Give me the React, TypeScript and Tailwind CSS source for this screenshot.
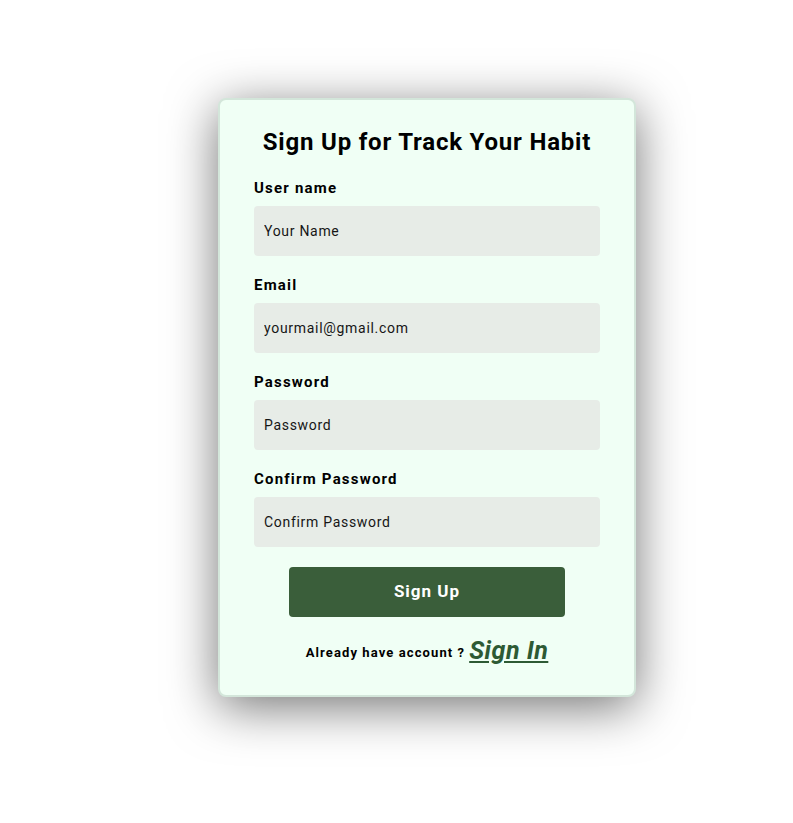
export default function App() {
  const fields = [
    { label: "User name", placeholder: "Your Name", type: "text" },
    { label: "Email", placeholder: "yourmail@gmail.com", type: "email" },
    { label: "Password", placeholder: "Password", type: "password" },
    { label: "Confirm Password", placeholder: "Confirm Password", type: "password" },
  ];

  return (
    <div className="min-h-[823px] bg-white pt-[98px] pl-[218px] font-['Roboto',sans-serif]">
      {/* card */}
      <div className="w-[418px] rounded-lg border-2 border-[#d3e6da] bg-[#f0fff5] px-[34px] pt-[26px] pb-[26px] shadow-[0_10px_50px_rgba(0,0,0,0.55)]">
        <h1 className="text-center text-[24px] font-bold leading-8 tracking-[0.8px] text-black">
          Sign Up for Track Your Habit
        </h1>

        <form className="mt-5 flex flex-col gap-[19px]">
          {fields.map((f) => (
            <div key={f.label} className="flex flex-col">
              <label className="text-[15px] font-bold leading-5 tracking-[1.2px] text-black">
                {f.label}
              </label>
              <input
                type={f.type}
                placeholder={f.placeholder}
                className="mt-2 h-[50px] w-full rounded bg-[#e7ece7] px-[10px] text-[14px] tracking-[0.7px] text-black outline-none placeholder:text-[#161616]"
              />
            </div>
          ))}
        </form>

        <div className="mt-5 flex justify-center">
          <button className="h-[50px] w-[276px] rounded bg-[#3a5e3a] text-[17px] font-bold tracking-[1px] text-white">
            Sign Up
          </button>
        </div>

        <p className="mt-5 flex h-8 items-center justify-center text-[13px] font-bold tracking-[1.1px] text-black">
          Already have account ?
          <a href="#" className="ml-1 -mt-1 text-[25px] font-bold italic tracking-[0.5px] text-[#2d5a34] underline">
            Sign In
          </a>
        </p>
      </div>
    </div>
  );
}
